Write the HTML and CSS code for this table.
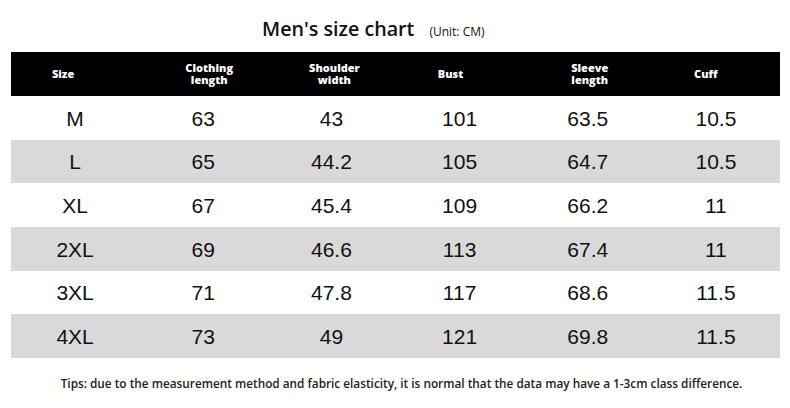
FILE: index.html
```html
<!DOCTYPE html>
<html>
<head>
<meta charset="utf-8">
<link rel="stylesheet" href="styles.css">
</head>
<body>
<div class="page">
  <div class="title-row">
    <h1 class="title">Men's size chart</h1>
    <span class="unit">(Unit: CM)</span>
  </div>
  <div class="chart">
    <div class="row head">
      <div class="hcell h1">Size</div>
      <div class="hcell h2"><span class="ln">Clothing</span><span class="ln">length</span></div>
      <div class="hcell h3"><span class="ln">Shoulder</span><span class="ln">width</span></div>
      <div class="hcell h4">Bust</div>
      <div class="hcell h5"><span class="ln">Sleeve</span><span class="ln">length</span></div>
      <div class="hcell h6">Cuff</div>
    </div>
    <div class="row">
      <div class="cell">M</div><div class="cell">63</div><div class="cell">43</div><div class="cell">101</div><div class="cell">63.5</div><div class="cell">10.5</div>
    </div>
    <div class="row alt">
      <div class="cell">L</div><div class="cell">65</div><div class="cell">44.2</div><div class="cell">105</div><div class="cell">64.7</div><div class="cell">10.5</div>
    </div>
    <div class="row">
      <div class="cell">XL</div><div class="cell">67</div><div class="cell">45.4</div><div class="cell">109</div><div class="cell">66.2</div><div class="cell">11</div>
    </div>
    <div class="row alt">
      <div class="cell">2XL</div><div class="cell">69</div><div class="cell">46.6</div><div class="cell">113</div><div class="cell">67.4</div><div class="cell">11</div>
    </div>
    <div class="row">
      <div class="cell">3XL</div><div class="cell">71</div><div class="cell">47.8</div><div class="cell">117</div><div class="cell">68.6</div><div class="cell">11.5</div>
    </div>
    <div class="row alt">
      <div class="cell">4XL</div><div class="cell">73</div><div class="cell">49</div><div class="cell">121</div><div class="cell">69.8</div><div class="cell">11.5</div>
    </div>
  </div>
  <p class="tips">Tips: due to the measurement method and fabric elasticity, it is normal that the data may have a 1-3cm class difference.</p>
</div>
</body>
</html>
```

FILE: styles.css
```css
* { box-sizing: border-box; }
html, body { margin: 0; padding: 0; background: #fff; }
.page {
  width: 790px;
  height: 408px;
  overflow: hidden;
  font-family: "Open Sans", "Noto Sans", sans-serif;
  color: #111;
}
.title-row {
  display: flex;
  align-items: baseline;
  height: 52px;
  padding-left: 262px;
  padding-top: 14px;
}
.title {
  margin: 0;
  font-size: 19.7px;
  font-weight: 600;
  line-height: 30px;
  color: #111;
}
.unit {
  margin-left: 15px;
  font-size: 12px;
  font-weight: 500;
  color: #111;
}
.chart {
  margin: 0 10px 0 11px;
}
.row {
  display: grid;
  grid-template-columns: repeat(6, 1fr);
  height: 43.67px;
  align-items: center;
}
.row.head {
  height: 44px;
  background: #000;
  color: #fff;
}
.row.alt { background: #d9d9d9; }
.hcell {
  display: flex;
  flex-direction: column;
  align-items: center;
  font-size: 11px;
  font-weight: 800;
  line-height: 12px;
}
.ln {
  display: block;
  height: 12px;
  line-height: 12px;
}
.h1 { padding-right: 24px; }
.h2 { padding-left: 12px; }
.h3 { padding-left: 6px; }
.h4 { padding-right: 18px; }
.h5 { padding-left: 4px; }
.h6 { padding-right: 20px; }
.cell {
  text-align: center;
  font-family: "Liberation Sans", Arial, sans-serif;
  font-size: 21px;
  color: #111;
  padding-top: 2px;
}
.tips {
  margin: 17px 0 0 0;
  text-align: center;
  padding-left: 13px;
  font-size: 11.8px;
  font-weight: 600;
  color: #222;
}
```
